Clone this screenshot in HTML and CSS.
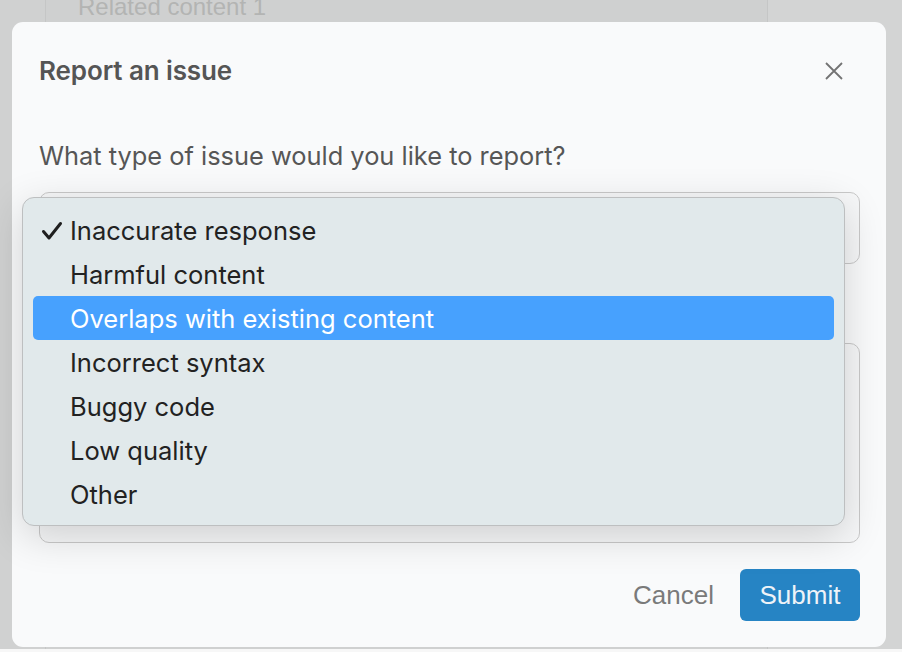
FILE: index.html
```html
<!DOCTYPE html>
<html lang="en">
<head>
<meta charset="utf-8">
<title>Report an issue</title>
<link rel="stylesheet" href="styles.css">
</head>
<body>
<div class="page">
  <div class="backdrop">
    <div class="bg-side"></div>
    <div class="bg-main"><div class="bg-item">Related content 1</div></div>
    <div class="bg-rest"></div>
  </div>

  <div class="modal" role="dialog" aria-labelledby="modal-title">
    <div class="modal-header">
      <h2 class="modal-title" id="modal-title">Report an issue</h2>
      <button class="close-btn" aria-label="Close">
        <svg width="18" height="18" viewBox="0 0 18 18"><path d="M1 1 L17 17 M17 1 L1 17" stroke="#737373" stroke-width="1.8" fill="none"/></svg>
      </button>
    </div>
    <p class="question">What type of issue would you like to report?</p>
    <div class="select-box"></div>
    <div class="textarea-box"></div>
    <div class="modal-footer">
      <button class="btn-cancel">Cancel</button>
      <button class="btn-submit">Submit</button>
    </div>

    <ul class="dropdown" role="listbox">
      <li class="option selected"><span class="check"><svg width="22" height="20" viewBox="0 0 22 20"><path d="M2.5 10.5 L8 17 L19.5 2.5" stroke="#1f1f1f" stroke-width="3" fill="none" stroke-linecap="round" stroke-linejoin="round"/></svg></span>Inaccurate response</li>
      <li class="option">Harmful content</li>
      <li class="option active">Overlaps with existing content</li>
      <li class="option">Incorrect syntax</li>
      <li class="option">Buggy code</li>
      <li class="option">Low quality</li>
      <li class="option">Other</li>
    </ul>
  </div>
</div>
</body>
</html>
```

FILE: styles.css
```css
* { box-sizing: border-box; }

html, body {
  margin: 0;
  padding: 0;
  background: #f7f7f7;
}

.page {
  position: relative;
  width: 902px;
  height: 649px;
  overflow: hidden;
  background: #d2d3d3;
}

.backdrop {
  display: flex;
  height: 100%;
}

.bg-side {
  width: 45px;
  background: #d0d1d1;
}

.bg-main {
  width: 723px;
  border-left: 1px solid #c5c6c6;
  border-right: 1px solid #c5c6c6;
  background: #cfd0d0;
}

.bg-item {
  margin-top: -8px;
  padding-left: 32px;
  font-family: "Liberation Sans", Arial, sans-serif;
  font-size: 24px;
  line-height: 30px;
  color: #b3b4b3;
}

.bg-rest {
  flex: 1;
  background: #d3d4d4;
}

.modal {
  position: absolute;
  left: 12px;
  top: 22px;
  width: 874px;
  height: 625px;
  background: #f9fafb;
  border-radius: 11px;
  padding: 0 26px 0 27px;
  display: flex;
  flex-direction: column;
  font-family: Inter, "Noto Sans", sans-serif;
}

.modal-header {
  display: flex;
  justify-content: space-between;
  align-items: center;
  padding-top: 32px;
  height: 66px;
}

.modal-title {
  margin: 0;
  font-size: 26px;
  font-weight: 600;
  line-height: 34px;
  color: #555;
  letter-spacing: -0.1px;
}

.close-btn {
  border: 0;
  background: transparent;
  padding: 0;
  margin-right: 17px;
  width: 18px;
  height: 18px;
  display: flex;
}

.question {
  margin: 53px 0 0;
  font-size: 25.4px;
  line-height: 30px;
  color: #565656;
}

.select-box {
  margin-top: 21px;
  height: 72px;
  border: 1px solid #c9c9c9;
  border-radius: 10px;
  background: #f6f7f8;
}

.textarea-box {
  margin-top: 79px;
  height: 200px;
  border: 1px solid #c9c9c9;
  border-radius: 10px;
  background: #f6f7f8;
}

.modal-footer {
  margin-top: 26px;
  display: flex;
  justify-content: flex-end;
  align-items: center;
  gap: 26px;
}

.btn-cancel {
  border: 0;
  background: transparent;
  padding: 0;
  font-family: "Liberation Sans", Arial, sans-serif;
  font-size: 26px;
  color: #7a7a7a;
}

.btn-submit {
  width: 120px;
  height: 52px;
  border: 0;
  border-radius: 6px;
  background: #2684c4;
  color: #eef3f8;
  font-family: "Liberation Sans", Arial, sans-serif;
  font-size: 26px;
}

.dropdown {
  position: absolute;
  left: 10px;
  top: 175px;
  width: 823px;
  height: 329px;
  margin: 0;
  padding: 10px 10px;
  list-style: none;
  background: #e1e9eb;
  border: 1px solid #bdbfc0;
  border-radius: 12px;
  box-shadow: 0 10px 40px rgba(0, 0, 0, 0.16);
}

.option {
  position: relative;
  height: 44px;
  line-height: 46px;
  padding-left: 37px;
  font-size: 25.5px;
  color: #222;
  border-radius: 5px;
}

.option.active {
  background: #47a1fe;
  color: #fff;
}

.check {
  position: absolute;
  left: 8px;
  top: 13px;
  width: 22px;
  height: 20px;
  display: flex;
}
```
